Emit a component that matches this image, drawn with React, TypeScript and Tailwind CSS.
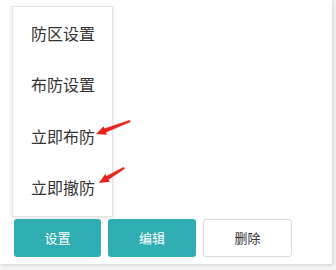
const items = ["防区设置", "布防设置", "立即布防", "立即撤防"];

// red hand-drawn style arrow: tail -> tip, tapered shaft with a filled head
function Arrow({ tip, tail }: { tip: [number, number]; tail: [number, number] }) {
  const [tx, ty] = tip;
  const [sx, sy] = tail;
  const len = Math.hypot(sx - tx, sy - ty);
  const ux = (sx - tx) / len;
  const uy = (sy - ty) / len;
  const px = -uy;
  const py = ux;
  const hl = 10;
  const hw = 4.5;
  const bx = tx + ux * hl;
  const by = ty + uy * hl;
  const head = `${tx},${ty} ${bx + px * hw},${by + py * hw} ${bx - px * hw},${by - py * hw}`;
  const w1 = 1.9;
  const w2 = 0.8;
  const shaft = `${bx - ux * 1 + px * w1},${by - uy * 1 + py * w1} ${sx + px * w2},${sy + py * w2} ${sx - px * w2},${sy - py * w2} ${bx - ux * 1 - px * w1},${by - uy * 1 - py * w1}`;
  return (
    <svg className="pointer-events-none absolute left-0 top-0" width="336" height="270">
      <polygon points={head} fill="#e8231d" />
      <polygon points={shaft} fill="#e8231d" strokeLinejoin="round" stroke="#e8231d" strokeWidth="0.6" />
    </svg>
  );
}

export default function App() {
  return (
    <div className="relative h-[270px] w-[336px] bg-[#f3f3f3] font-['Microsoft_YaHei','Noto_Sans_CJK_SC',sans-serif]">
      <div className="h-[264px] w-[332px] bg-white shadow-[1px_1px_3px_rgba(0,0,0,0.15)]">
        <div className="px-3 pt-[6px]">
          {/* Menu */}
          <div className="w-[101px] border border-[#e4e4e4] bg-white shadow-[0_1px_4px_rgba(0,0,0,0.12)]">
            <ul className="flex flex-col pb-[3px]">
              {items.map((t) => (
                <li key={t} className="flex h-[51.5px] items-center pl-[18px] text-[16px] text-[#333]">
                  {t}
                </li>
              ))}
            </ul>
          </div>

          {/* Buttons */}
          <div className="mt-[2px] flex gap-[7px] pl-[2px]">
            <button className="h-[38px] w-[87px] rounded-[3px] bg-[#30adb3] text-[13px] text-white">
              设置
            </button>
            <button className="h-[38px] w-[88px] rounded-[3px] bg-[#30adb3] text-[13px] text-white">
              编辑
            </button>
            <button className="h-[38px] w-[89px] rounded-[3px] border border-[#d9d9d9] bg-white text-[13px] text-[#333]">
              删除
            </button>
          </div>
        </div>
      </div>

      <Arrow tip={[96, 134]} tail={[130, 121]} />
      <Arrow tip={[99, 183]} tail={[124, 168]} />
    </div>
  );
}
